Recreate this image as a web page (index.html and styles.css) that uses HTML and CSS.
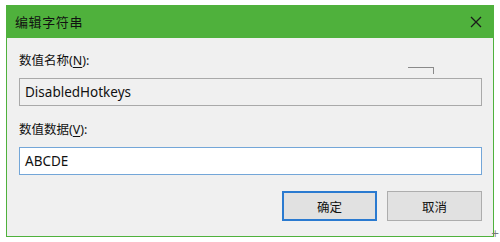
FILE: index.html
```html
<!DOCTYPE html>
<html lang="zh-CN">
<head>
<meta charset="utf-8">
<title>编辑字符串</title>
<link rel="stylesheet" href="styles.css">
</head>
<body>
<div class="window">
  <div class="titlebar">
    <span class="title">编辑字符串</span>
    <svg class="close" width="12" height="12" viewBox="0 0 12 12"><path d="M1 1 L11 11 M11 1 L1 11" stroke="#1a1a1a" stroke-width="1.3" fill="none"/></svg>
  </div>
  <div class="content">
    <div class="field">
      <label class="label">数值名称(<u>N</u>):</label>
      <div class="box readonly">DisabledHotkeys</div>
    </div>
    <div class="field">
      <label class="label">数值数据(<u>V</u>):</label>
      <div class="box focused">ABCDE</div>
    </div>
    <div class="buttons">
      <button class="btn default">确定</button>
      <button class="btn">取消</button>
    </div>
    <span class="glitch"></span>
  </div>
</div>
<span class="grip">+</span>
</body>
</html>
```
FILE: styles.css
```css
html, body {
  margin: 0;
  padding: 0;
  background: #ffffff;
}
body {
  width: 500px;
  height: 242px;
  position: relative;
  overflow: hidden;
  font-family: "Noto Sans", "Noto Sans CJK SC", sans-serif;
}
.window {
  margin: 5px 0 0 6px;
  width: 488px;
  height: 232px;
  display: flex;
  flex-direction: column;
}
.titlebar {
  height: 33px;
  background: #4fb13c;
  display: flex;
  align-items: center;
  justify-content: space-between;
  padding: 0 10px 0 9px;
}
.title {
  font-family: "Noto Sans CJK SC", sans-serif;
  font-size: 13px;
  letter-spacing: 0.6px;
  color: #111;
}
.close {
  margin-right: 2px;
}
.content {
  flex: 1;
  position: relative;
  background: #f0f0f0;
  border: 1px solid #4fb13c;
  border-top: none;
  padding: 12px 11px 0 12px;
  display: flex;
  flex-direction: column;
}
.field {
  display: flex;
  flex-direction: column;
}
.field + .field {
  margin-top: 13px;
}
.label {
  font-family: "Noto Sans", "Noto Sans CJK SC", sans-serif;
  font-size: 12.5px;
  color: #111;
  line-height: 22px;
  margin-bottom: 6px;
}
.label u {
  text-decoration-thickness: 1px;
  text-underline-offset: 2px;
}
.box {
  height: 28px;
  box-sizing: border-box;
  padding: 0 5px;
  font-size: 13.5px;
  line-height: 26px;
  color: #111;
}
.readonly {
  border: 1px solid #a9a9a9;
  background: #f0f0f0;
}
.focused {
  border: 1px solid #73a6d8;
  background: #ffffff;
}
.buttons {
  display: flex;
  justify-content: flex-end;
  gap: 10px;
  margin-top: 16px;
}
.btn {
  width: 95px;
  height: 30px;
  box-sizing: border-box;
  background: #e1e1e1;
  border: 1px solid #adadad;
  font-family: "Noto Sans CJK SC", sans-serif;
  font-size: 12.5px;
  color: #111;
  padding: 0;
}
.btn.default {
  border: 2px solid #2a7ad0;
}
.glitch {
  position: absolute;
  left: 401px;
  top: 29px;
  width: 25px;
  height: 6px;
  border-top: 1px solid #8a8a8a;
  border-right: 1px solid #8a8a8a;
}
.grip {
  position: absolute;
  left: 491px;
  top: 228px;
  font-size: 10px;
  color: #777;
  font-family: "DejaVu Sans", sans-serif;
}
```
